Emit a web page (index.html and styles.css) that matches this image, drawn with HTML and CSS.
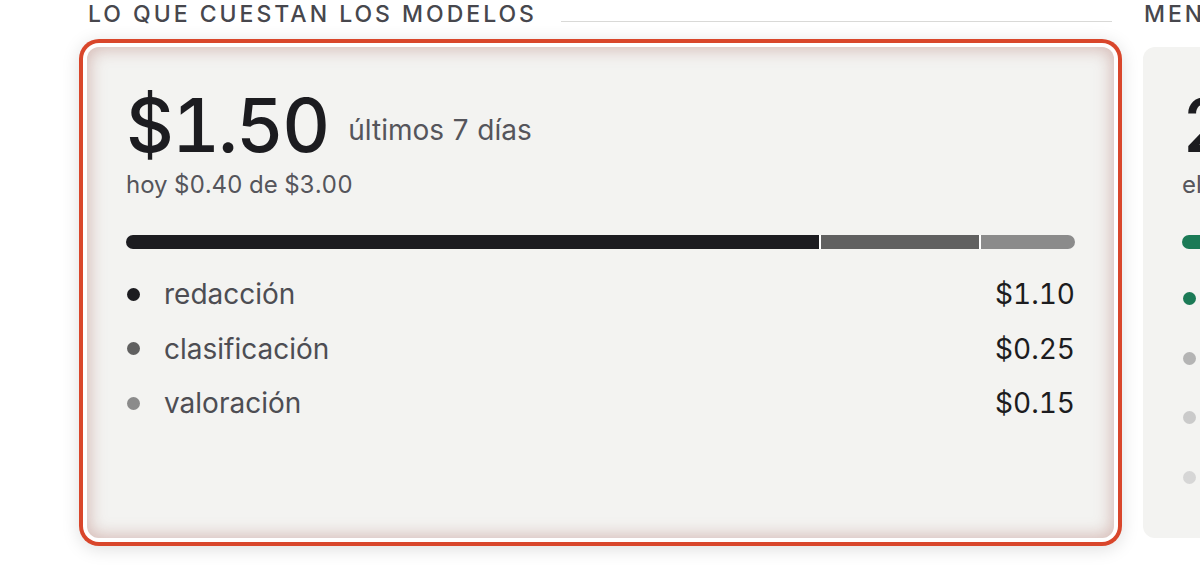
FILE: index.html
```html
<!DOCTYPE html>
<html lang="es">
<head>
<meta charset="utf-8">
<title>Lo que cuestan los modelos</title>
<link rel="stylesheet" href="styles.css">
</head>
<body>
<div class="page">
  <section class="col">
    <h2 class="sec-head"><span class="sec-title">LO QUE CUESTAN LOS MODELOS</span><i class="rule"></i></h2>
    <div class="card highlighted">
      <div class="headline">
        <span class="big">$1.50</span>
        <span class="period">últimos 7 días</span>
      </div>
      <div class="sub">hoy $0.40 de $3.00</div>
      <div class="bar">
        <span class="seg c1" style="flex-grow:110"></span>
        <span class="seg c2" style="flex-grow:25"></span>
        <span class="seg c3" style="flex-grow:15"></span>
      </div>
      <ul class="rows">
        <li class="row"><i class="dot c1"></i><span class="lbl">redacción</span><span class="val">$1.10</span></li>
        <li class="row"><i class="dot c2"></i><span class="lbl">clasificación</span><span class="val">$0.25</span></li>
        <li class="row"><i class="dot c3"></i><span class="lbl">valoración</span><span class="val">$0.15</span></li>
      </ul>
    </div>
  </section>
  <section class="col">
    <h2 class="sec-head"><span class="sec-title">MENSAJES ENVIADOS</span><i class="rule"></i></h2>
    <div class="card">
      <div class="headline">
        <span class="big">24</span>
        <span class="period">esta semana</span>
      </div>
      <div class="sub">el 62% respondidos</div>
      <div class="bar">
        <span class="seg g1" style="flex-grow:62"></span>
        <span class="seg g0" style="flex-grow:38"></span>
      </div>
      <ul class="rows rows-b">
        <li class="row"><i class="dot g1"></i><span class="lbl">respondidos</span><span class="val">15</span></li>
        <li class="row"><i class="dot g2"></i><span class="lbl">pendientes</span><span class="val">5</span></li>
        <li class="row"><i class="dot g3"></i><span class="lbl">rechazados</span><span class="val">3</span></li>
        <li class="row"><i class="dot g4"></i><span class="lbl">sin abrir</span><span class="val">1</span></li>
      </ul>
    </div>
  </section>
</div>
</body>
</html>
```

FILE: styles.css
```css
html, body {
  margin: 0;
  padding: 0;
  background: #ffffff;
  overflow: hidden;
}

body {
  font-family: Inter, "Noto Sans", "DejaVu Sans", sans-serif;
  color: #1c1c20;
  width: 1200px;
  height: 583px;
}

.page {
  display: grid;
  grid-template-columns: 1027px 1027px;
  column-gap: 29px;
  padding-left: 87px;
  width: max-content;
}

.col {
  display: flex;
  flex-direction: column;
}

.sec-head {
  display: flex;
  align-items: baseline;
  gap: 24px;
  margin: 0 0 19px 0;
  font-size: 23px;
  line-height: 28px;
  font-weight: 500;
  letter-spacing: 0.13em;
  color: #47474d;
  padding-left: 1px;
}

.sec-title {
  white-space: nowrap;
}

.rule {
  flex: 1;
  display: inline-block;
  height: 1px;
  margin-bottom: 1px;
  margin-right: 2px;
  background: #d9d9d7;
}

.card {
  background: #f3f3f1;
  border-radius: 12px;
  height: 491px;
  box-sizing: border-box;
  padding: 41px 39px 0 39px;
  display: flex;
  flex-direction: column;
  font-variant-numeric: tabular-nums;
}

.highlighted {
  box-shadow:
    inset 0 0 16px 3px rgba(165, 95, 85, 0.36),
    0 0 0 4px #ffffff,
    0 0 0 8px #d9462b,
    0 3px 18px 8px rgba(0, 0, 0, 0.13);
}

.headline {
  display: flex;
  align-items: flex-start;
  gap: 20px;
  line-height: 1;
  height: 74px;
}

.big {
  font-size: 74px;
  font-weight: 500;
  letter-spacing: -0.025em;
  color: #1c1c20;
}

.period {
  margin-top: 26px;
  font-size: 28px;
  line-height: 1.2;
  color: #55555b;
}

.sub {
  margin-top: 9px;
  font-size: 24px;
  line-height: 1.2;
  color: #55555b;
}

.bar {
  margin-top: 35px;
  height: 14px;
  border-radius: 7px;
  overflow: hidden;
  display: flex;
  gap: 2px;
  background: #ffffff;
}

.seg {
  flex-basis: 0;
  height: 100%;
}

.c1 { background: #1c1c20; }
.c2 { background: #606060; }
.c3 { background: #8b8b8b; }
.g1 { background: #1b7a56; }
.g0 { background: #e3e3e1; }
.g2 { background: #b4b4b4; }
.g3 { background: #cacaca; }
.g4 { background: #d6d6d6; }

.rows {
  list-style: none;
  margin: 18px 0 0 0;
  padding: 0;
}

.row {
  display: flex;
  align-items: center;
  height: 54.5px;
}

.rows-b .row {
  height: 59.5px;
}

.rows-b {
  margin-top: 20px;
}

.dot {
  width: 13px;
  height: 13px;
  border-radius: 50%;
  margin-left: 1px;
  flex: none;
}

.lbl {
  margin-left: 24px;
  font-size: 28px;
  color: #4d4d53;
  flex: 1;
}

.val {
  font-size: 28px;
  color: #1c1c20;
}
```
